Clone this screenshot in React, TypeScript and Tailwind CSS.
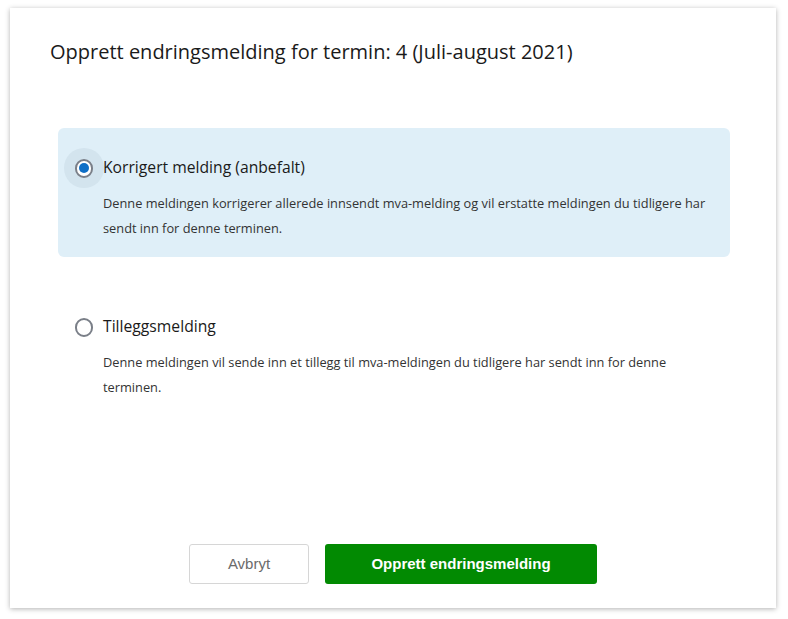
import { useState } from 'react';

const options = [
  {
    id: 'korrigert',
    label: 'Korrigert melding (anbefalt)',
    description:
      'Denne meldingen korrigerer allerede innsendt mva-melding og vil erstatte meldingen du tidligere har sendt inn for denne terminen.',
  },
  {
    id: 'tillegg',
    label: 'Tilleggsmelding',
    description:
      'Denne meldingen vil sende inn et tillegg til mva-meldingen du tidligere har sendt inn for denne terminen.',
  },
];

export default function App() {
  const [selected, setSelected] = useState('korrigert');

  return (
    <div className="min-h-[619px] bg-white pt-[8px] pl-[10px] font-['Open_Sans',sans-serif]">
      <div className="flex h-[600px] w-[766px] flex-col bg-white shadow-[0_1px_5px_rgba(0,0,0,0.3)]">
        <h2 className="pl-[40px] pt-[30px] text-[20px] leading-[28px] text-[#1a1a1a]">
          Opprett endringsmelding for termin: 4 (Juli-august 2021)
        </h2>

        {/* Options */}
        <div className="mt-[62px] ml-[48px] w-[672px] space-y-[30px]">
          {options.map((opt) => {
            const active = selected === opt.id;
            return (
              <div
                key={opt.id}
                onClick={() => setSelected(opt.id)}
                className={`rounded-[6px] pt-[28px] pb-[16px] pl-[17px] pr-[14px] cursor-pointer ${
                  active ? 'bg-[#dfeff8]' : 'bg-transparent'
                }`}
              >
                <div className="flex items-center h-[24px]">
                  <span className="relative flex h-[18px] w-[18px] shrink-0 items-center justify-center">
                    {active && (
                      <span className="absolute -inset-[11px] rounded-full bg-[#d3e4ee]" />
                    )}
                    <span className="relative flex h-[19px] w-[19px] items-center justify-center rounded-full border-2 border-[#7a7f88] bg-white">
                      {active && <span className="h-[10px] w-[10px] rounded-full bg-[#0f6fc6]" />}
                    </span>
                  </span>
                  <span className="ml-[10px] text-[15.7px] text-[#1a1a1a]">{opt.label}</span>
                </div>
                <p className="mt-[11px] ml-[28px] text-[12.8px] leading-[25px] text-[#333333]">
                  {opt.description}
                </p>
              </div>
            );
          })}
        </div>

        {/* Actions */}
        <div className="mt-auto mb-[24px] flex justify-center gap-[16px]">
          <button className="h-[40px] w-[120px] rounded-[3px] border border-[#d6d6d6] bg-white text-[15px] text-[#6b6b6b] font-['Liberation_Sans',sans-serif]">
            Avbryt
          </button>
          <button className="h-[40px] w-[272px] rounded-[3px] bg-[#028a02] text-[15px] font-bold text-white font-['Liberation_Sans',sans-serif]">
            Opprett endringsmelding
          </button>
        </div>
      </div>
    </div>
  );
}
